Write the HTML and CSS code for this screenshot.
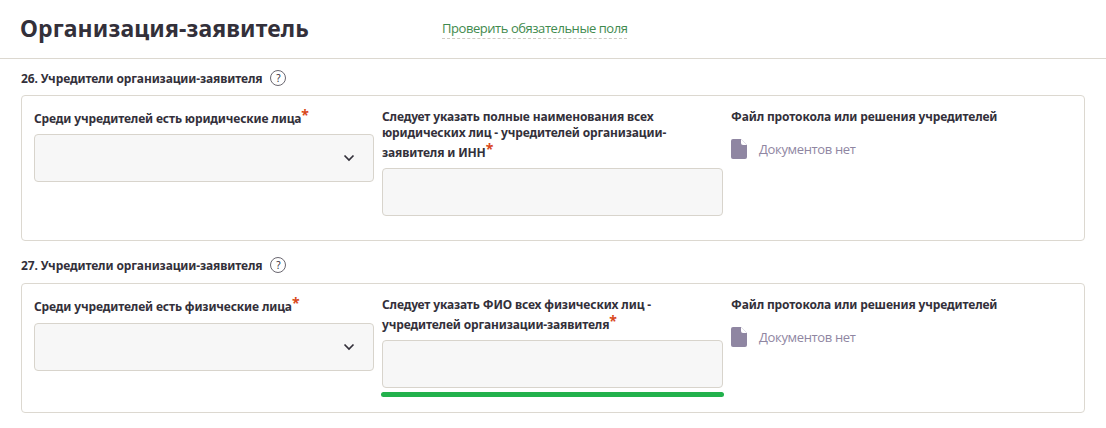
FILE: index.html
```html
<!DOCTYPE html>
<html lang="ru">
<head>
<meta charset="utf-8">
<title>Организация-заявитель</title>
<link rel="stylesheet" href="styles.css">
</head>
<body>
<header class="page-head">
  <h1 class="page-title">Организация-заявитель</h1>
  <a class="check-link">Проверить обязательные поля</a>
</header>
<main class="content">
  <section class="group">
    <h2 class="group-title"><span>26. Учредители организации-заявителя</span><span class="help">?</span></h2>
    <div class="card">
      <div class="field">
        <label class="label label-tight">Среди учредителей есть юридические лица<span class="req">*</span></label>
        <div class="control select">
          <svg class="chev" width="12" height="8" viewBox="0 0 12 8"><path d="M1.5 1.5 6 6l4.5-4.5" fill="none" stroke="#33303a" stroke-width="1.7"/></svg>
        </div>
      </div>
      <div class="field">
        <label class="label">Следует указать полные наименования всех юридических лиц - учредителей организации-заявителя и ИНН<span class="req">*</span></label>
        <div class="control"></div>
      </div>
      <div class="field">
        <label class="label">Файл протокола или решения учредителей</label>
        <div class="docs">
          <svg class="doc-icon" width="16" height="20" viewBox="0 0 16 20"><path d="M2 0h8l6 6v12a2 2 0 0 1-2 2H2a2 2 0 0 1-2-2V2a2 2 0 0 1 2-2z" fill="#8f86a2"/><path d="M10 0v4a2 2 0 0 0 2 2h4z" fill="#fff"/></svg>
          <span>Документов нет</span>
        </div>
      </div>
    </div>
  </section>
  <section class="group group-next">
    <h2 class="group-title"><span>27. Учредители организации-заявителя</span><span class="help">?</span></h2>
    <div class="card card-short">
      <div class="field">
        <label class="label label-mid">Среди учредителей есть физические лица<span class="req">*</span></label>
        <div class="control select">
          <svg class="chev" width="12" height="8" viewBox="0 0 12 8"><path d="M1.5 1.5 6 6l4.5-4.5" fill="none" stroke="#33303a" stroke-width="1.7"/></svg>
        </div>
      </div>
      <div class="field">
        <label class="label">Следует указать ФИО всех физических лиц - учредителей организации-заявителя<span class="req">*</span></label>
        <div class="control"></div>
        <div class="progress"></div>
      </div>
      <div class="field">
        <label class="label">Файл протокола или решения учредителей</label>
        <div class="docs">
          <svg class="doc-icon" width="16" height="20" viewBox="0 0 16 20"><path d="M2 0h8l6 6v12a2 2 0 0 1-2 2H2a2 2 0 0 1-2-2V2a2 2 0 0 1 2-2z" fill="#8f86a2"/><path d="M10 0v4a2 2 0 0 0 2 2h4z" fill="#fff"/></svg>
          <span>Документов нет</span>
        </div>
      </div>
    </div>
  </section>
</main>
</body>
</html>
```
FILE: styles.css
```css
* { box-sizing: border-box; }
html, body { margin: 0; padding: 0; background: #fff; }
body { font-family: "Noto Sans", sans-serif; color: #33303a; height: 428px; overflow: hidden; }
.page-head { display: flex; align-items: center; height: 59px; padding: 0 0 3px 20px; border-bottom: 1px solid #dcd8d0; }
.page-title { margin: 0; width: 422px; font-size: 23px; letter-spacing: 0.12px; line-height: 30px; font-weight: 700; color: #33303a; }
.check-link { margin-top: 2px; font-size: 13px; letter-spacing: -0.45px; line-height: 18px; color: #3f8a4e; border-bottom: 1px dashed #cfcbc3; padding-bottom: 1px; font-family: "Open Sans", sans-serif; }
.content { padding: 0 21px; }
.group { padding-top: 10px; }
.group-next { padding-top: 15px; }
.group-title { display: flex; align-items: center; gap: 8px; margin: 0 0 8px; height: 18px; font-size: 12px; letter-spacing: -0.12px; font-weight: 700; color: #33303a; }
.group-next .group-title { margin-bottom: 9px; }
.help { display: inline-flex; align-items: center; justify-content: center; width: 16px; height: 16px; border: 1px solid #6a6770; border-radius: 50%; font-size: 10px; font-weight: 400; }
.card { display: grid; grid-template-columns: 340px 341px 1fr; column-gap: 8px; height: 146px; padding: 13px 12px 12px; border: 1px solid #dcd8d0; border-radius: 4px; }
.card-short { height: 130px; }
.label { display: block; font-size: 12px; letter-spacing: -0.14px; line-height: 16px; font-weight: 700; color: #33303a; margin-bottom: 7px; }
.label-tight { margin-top: -2px; margin-bottom: 7px; }
.label-mid { margin-top: -2px; margin-bottom: 8px; }
.req { display: inline-block; color: #d9481c; font-size: 14px; font-weight: 700; line-height: 16px; vertical-align: 3px; }
.control { height: 48px; background: #f7f7f7; border: 1px solid #d8d4cc; border-radius: 4px; }
.select { display: flex; align-items: center; justify-content: flex-end; padding-right: 18px; }
.progress { height: 5px; margin: 4px -1px 0; background: #22b14c; border-radius: 3px; }
.docs { display: flex; align-items: center; gap: 12px; margin-top: 14px; font-size: 13px; letter-spacing: -0.35px; line-height: 20px; color: #8f86a2; font-family: "Open Sans", sans-serif; }
.doc-icon { flex: none; }
```
